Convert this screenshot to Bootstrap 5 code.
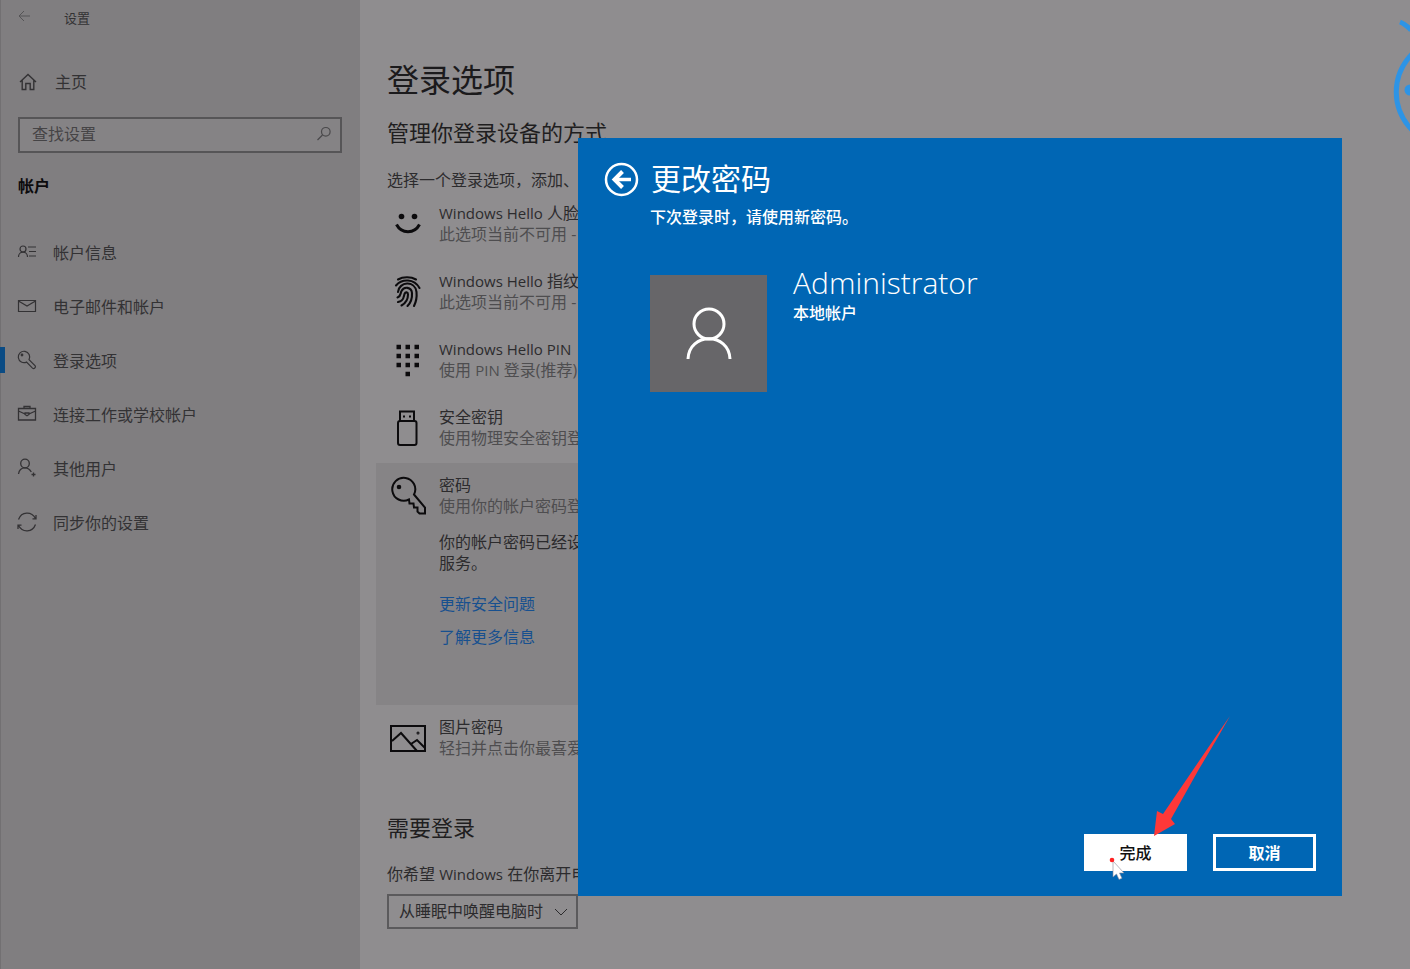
<!DOCTYPE html>
<html lang="zh-CN">
<head>
<meta charset="utf-8">
<meta name="viewport" content="width=device-width, initial-scale=1">
<title>设置</title>
<link href="https://cdn.jsdelivr.net/npm/bootstrap@5.3.0/dist/css/bootstrap.min.css" rel="stylesheet">
<style>
body{font:400 16px/21px "Open Sans","Noto Sans CJK SC",sans-serif;background:#8f8d8f;color:#2c2b2d}
svg{display:block;fill:none;stroke:currentColor;flex:none}
a{text-decoration:none}
.side{flex:0 0 360px;background:#807e80;border-left:1px solid #727072;color:#333234}
.side-top{height:36px;padding-left:17px;gap:34px;font-size:13px}
.side-top svg{color:#555456}
.side-home{height:40px;margin-top:26px;padding-left:18px;gap:18px;color:inherit}
.search{height:36px;margin:15px 18px 0 17px;border:2px solid #565557;background:#858385}
.search svg{color:#4a494b}
.search input{background:none;border:0;outline:0;color:#454446;padding:0 0 2px 12px;min-width:0}
.search input::placeholder{color:#454446;opacity:1}
.side-head{line-height:24px;font-weight:700;color:#0c0b0d;margin:21px 0 0 17px}
.side-nav{margin-top:28px}
.side-link{height:54px;padding:0 0 0 16px;gap:16px;color:inherit;position:relative}
.side-link svg{margin-bottom:2px}
.side-link.active::before{content:"";position:absolute;left:-1px;top:13px;width:5px;height:26px;background:#0a4b84}
.pane{padding:56px 0 39px 16px;white-space:nowrap;min-width:0}
.ind{margin-left:11px}
h1{font-size:32px;line-height:48px;font-weight:400;margin-bottom:12px;color:#1b1a1c}
h2{font-size:22px;line-height:32px;font-weight:400;margin-bottom:0;color:#1f1e20}
.intro{margin-top:22px;margin-bottom:0}
.need{margin-top:38px}
.ask{margin:21px 0 9px}
.lat{font-size:15px}
.opt{padding:12px 0 14px 14px;gap:13px;max-width:640px}
.opt svg{color:#0c0b0d}
.sub{color:#4e4d4f}
.opened{background:#868486;min-height:242px}
.opened p{margin:15px 0 20px}
.opened a{color:#17508f}
.opened .links{gap:12px}
.pick{width:191px}
.pick select{height:35px;border:2px solid #5b5a5c;border-radius:0;background:#8f8d8f;color:#2c2b2d;padding:0 10px;appearance:none}
.pick svg{position:absolute;right:10px;top:14px;pointer-events:none}
.dlg{position:absolute;inset:138px 68px 73px 41%;background:#0066b4;color:#fff;padding:20px 26px 25px}
.dlg-body{padding-left:46px}
.dlg h3{font-size:30px;line-height:42px;font-weight:400;margin:0}
.note{line-height:24px;margin-top:5px;font-weight:500}
.back{width:35px;height:35px;border:0;padding:0;background:none;color:#fff}
.account{margin-top:46px;gap:26px}
.avatar{width:117px;height:117px;background:#676669;padding-top:32px}
.who{font-size:30px;line-height:40px;font-weight:300;margin-top:-12px}
.local{font-weight:500}
.acts{gap:26px}
.act{width:103px;height:37px;border:3px solid #fff;border-radius:0;padding:1px 0 0;line-height:21px;font-weight:500}
.act.done,.act.done:hover{background:#fff;color:#111}
.act.stop,.act.stop:hover{background:#0066b4;color:#fff;font-weight:700}
.arrow{position:absolute;right:111px;bottom:59px}
.cursor{position:absolute;right:215px;bottom:16px}
.ring{position:absolute;right:0;top:16px;color:#2d94e6}
</style>
</head>
<body>
<div class="d-flex min-vh-100 position-relative overflow-hidden">
<aside class="side">
  <div class="side-top d-flex align-items-center">
    <svg width="12" height="12" viewBox="0 0 12 12" class="mb-1"><path d="M12 6H1M6 1 1 6l5 5"/></svg><span>设置</span>
  </div>
  <a href="#" class="side-home d-flex align-items-center">
    <svg width="18" height="18" viewBox="0 0 18 18" stroke-width="1.4"><path d="M1 9 9 1.500 17 9M3.200 7.500v9h3.600v-6h4.400v6h3.600v-9"/></svg><span>主页</span>
  </a>
  <div class="search d-flex align-items-center">
    <input type="text" class="flex-grow-1" placeholder="查找设置" aria-label="查找设置">
    <svg width="16" height="16" viewBox="0 0 16 16" class="me-2 mb-1" stroke-width="1.2"><circle cx="9.800" cy="6.800" r="4.300"/><path d="M6.500 10 1.500 15"/></svg>
  </div>
  <div class="side-head">帐户</div>
  <nav class="side-nav d-flex flex-column">
    <a href="#" class="side-link d-flex align-items-center"><svg width="20" height="20" viewBox="0 0 20 20" stroke-width="1.2"><circle cx="6" cy="7" r="3"/><path d="M1.500 15c0-6.500 9-6.500 9 0M11 5h8M12 9.500h7M12 14h7"/></svg><span>帐户信息</span></a>
    <a href="#" class="side-link d-flex align-items-center"><svg width="20" height="20" viewBox="0 0 20 20" stroke-width="1.2"><path d="M1.500 4.500h17v11h-17zM1.500 5 10 10l8.500-5"/></svg><span>电子邮件和帐户</span></a>
    <a href="#" class="side-link active d-flex align-items-center"><svg width="20" height="20" viewBox="0 0 20 20" stroke-width="1.2"><path d="M12 9.700a5.700 5.700 0 1 0-2.500 2.400l6 6c1.500 1.200 3.700-.7 2.700-2.200z"/><circle cx="5" cy="5" r=".8"/></svg><span>登录选项</span></a>
    <a href="#" class="side-link d-flex align-items-center"><svg width="20" height="20" viewBox="0 0 20 20" stroke-width="1.300"><path d="M1.500 4.500h17v11.500h-17zM7 4.500v-2h6v2M1.500 7l6.500 3M18.500 7 12 10M8 9h4v1.500l-2 1.200-2-1.200z"/></svg><span>连接工作或学校帐户</span></a>
    <a href="#" class="side-link d-flex align-items-center"><svg width="20" height="20" viewBox="0 0 20 20" stroke-width="1.300"><circle cx="8" cy="5.500" r="4.300"/><path d="M1.500 16c.5-4 2.500-6.200 6.500-6.200 3 0 5 1.700 6.300 4.200M14.500 16.500h4M16.500 14.500v4"/></svg><span>其他用户</span></a>
    <a href="#" class="side-link d-flex align-items-center"><svg width="20" height="20" viewBox="0 0 20 20" stroke-width="1.300"><path d="M1.500 7.500c3-8 13-8.500 17-1M19 3v3.800h-3.500M18.500 12.500c-3 8-13 8.500-17 1M1 17v-3.800h3.500"/></svg><span>同步你的设置</span></a>
  </nav>
</aside>
<main class="pane flex-grow-1">
  <h1 class="ind">登录选项</h1>
  <h2 class="ind">管理你登录设备的方式</h2>
  <p class="ind intro">选择一个登录选项，添加、更</p>
  <div class="opt d-flex"><svg width="36" height="36" viewBox="0 0 36 36" stroke-width="3"><path d="M6.500 21.500c5 9.500 18 9.500 23 0"/><g fill="currentColor" stroke="none"><circle cx="11.500" cy="13.500" r="2.800"/><circle cx="24.500" cy="13.500" r="2.800"/></g></svg><div><div><span class="lat">Windows Hello</span> 人脸</div><div class="sub">此选项当前不可用 -</div></div></div>
  <div class="opt d-flex"><svg width="36" height="42" viewBox="0 0 36 42" stroke-width="2.100" stroke-linecap="round"><path d="M8 8.500c5-3 13-3 18 0M6 14.500c6-7 18-7 23.500 2.500M8 21c1-10.500 17-12 18.500 0 .5 5-.5 10-2.500 14M7.500 26.500c4-1.500 2.500-4 4-6.500 2.500-5 10-4 10.500 2 .3 5-1.500 10-4.500 13M8 31c6-1 5.500-5 6.500-8 1-2.500 3.500-2 3.500.5 0 4-2 8.500-6.500 11"/></svg><div><div><span class="lat">Windows Hello</span> 指纹</div><div class="sub">此选项当前不可用 -</div></div></div>
  <div class="opt d-flex"><svg width="36" height="42" viewBox="0 0 36 42" stroke-width="4.500" stroke-dasharray="4.500"><path d="M6.500 8H29M6.500 17H29M6.500 26H29M15.500 35h4.500"/></svg><div><div><span class="lat">Windows Hello PIN</span></div><div class="sub">使用 <span class="lat">PIN</span> 登录(推荐)</div></div></div>
  <div class="opt d-flex"><svg width="36" height="42" viewBox="0 0 36 42" stroke-width="2"><rect x="8" y="14" width="18.500" height="24" rx="2"/><path d="M10 14V4.500h14V14"/><path d="M13 9.500h2M19 9.500h2"/></svg><div><div>安全密钥</div><div class="sub">使用物理安全密钥登</div></div></div>
  <div class="opt opened d-flex"><svg width="36" height="42" viewBox="0 0 36 42" stroke-width="2"><path d="M24 19.500a11.500 11.500 0 1 0-5 5l.5 4h4l.5 4h3.500v4l2 2h5.500v-6z"/><circle cx="9" cy="12" r="1.300" fill="currentColor"/></svg>
    <div><div>密码</div><div class="sub">使用你的帐户密码登</div>
    <p>你的帐户密码已经设<br>服务。</p>
    <div class="links d-flex flex-column align-items-start"><a href="#">更新安全问题</a><a href="#">了解更多信息</a></div></div></div>
  <div class="opt d-flex"><svg width="36" height="42" viewBox="0 0 36 42" stroke-width="2"><path d="M1 9h34v25H1zM2 24l9-8 16 18M21 27l6-4 8 8"/><circle cx="28" cy="16" r=".5"/></svg><div><div>图片密码</div><div class="sub">轻扫并点击你最喜爱</div></div></div>
  <h2 class="ind need">需要登录</h2>
  <div class="ind">
    <label for="wake" class="d-block ask">你希望 <span class="lat">Windows</span> 在你离开电</label>
    <div class="pick position-relative">
      <select id="wake" class="w-100"><option>从睡眠中唤醒电脑时</option></select>
      <svg width="14" height="8" viewBox="0 0 14 8"><path d="m1 1 6 6 6-6"/></svg>
    </div>
  </div>
</main>
<svg class="ring" width="18" height="120" viewBox="0 0 18 120" stroke-width="5"><path d="M8 6c4 1.500 7 4 11 8M20 38C-1 60-1 92 20 114"/><circle cx="18" cy="74" r="3" fill="currentColor"/></svg>
<section class="dlg d-flex flex-column" role="dialog" aria-labelledby="dlgTitle">
  <div class="d-flex gap-2 align-items-center">
    <button type="button" class="back" aria-label="返回"><svg width="35" height="35" viewBox="0 0 35 35" stroke-width="2.500"><circle cx="17.500" cy="17.500" r="15.500"/><path d="M27 17.500H11" stroke-width="3.500"/><path d="m18.500 9.500-8 8 8 8" stroke-width="4"/></svg></button>
    <h3 id="dlgTitle" class="ms-1">更改密码</h3>
  </div>
  <div class="dlg-body">
    <div class="note">下次登录时，请使用新密码。</div>
    <div class="account d-flex">
      <div class="avatar d-flex justify-content-center"><svg width="46" height="54" viewBox="0 0 46 54" stroke-width="3"><circle cx="23" cy="17" r="15"/><path d="M2 52c1-27 41-27 42 0"/></svg></div>
      <div><div class="who">Administrator</div><div class="local">本地帐户</div></div>
    </div>
  </div>
  <div class="acts mt-auto d-flex justify-content-end">
    <button type="button" class="act btn done">完成</button>
    <button type="button" class="act btn stop">取消</button>
  </div>
  <svg class="arrow" width="77" height="122" viewBox="0 0 77 122"><path d="M76 1Q62 26 45 54L17 104l4 5L0 121l3-25 6 3L41 52Q60 24 76 1z" fill="#fe3838" stroke="none"/></svg>
  <svg class="cursor" width="18" height="24" viewBox="0 0 18 24"><path d="M4 5v16l3.500-3 2.500 5.500 3-1.300-2.500-5.200H15z" fill="#fff" stroke="#889" stroke-width=".6"/><circle cx="3" cy="4" r="2.300" fill="#f22" stroke="none"/></svg>
</section>
</div>
</body>
</html>
